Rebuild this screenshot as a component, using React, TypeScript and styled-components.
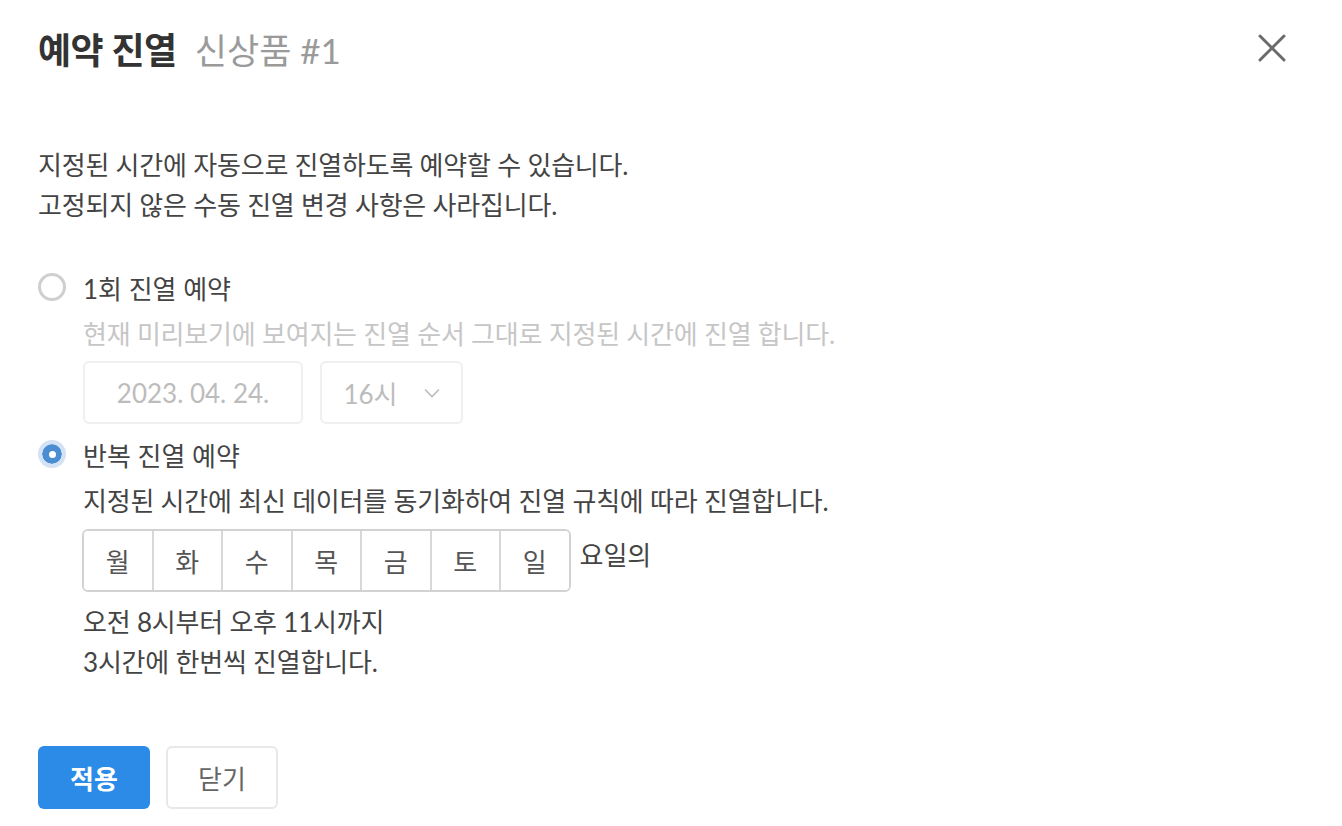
import React, { useState } from 'react';
import styled, { createGlobalStyle } from 'styled-components';

const GlobalStyle = createGlobalStyle`
    html, body {
        margin: 0;
        padding: 0;
        background: #fff;
    }
    body {
        font-family: Lato, "Noto Sans CJK KR", sans-serif;
        color: #444;
    }
`;

const Modal = styled.div`
    width: 1342px;
    height: 826px;
    box-sizing: border-box;
    padding: 26px 38px 0 38px;
    display: flex;
    flex-direction: column;
`;

const Header = styled.div`
    display: flex;
    align-items: center;
    height: 44px;
`;

const Title = styled.h1`
    margin: 0;
    font-size: 36px;
    font-weight: 700;
    color: #333;
    letter-spacing: -0.5px;
`;

const SubTitle = styled.span`
    margin-left: 18px;
    font-size: 35px;
    font-weight: 400;
    color: #9a9a9a;
`;

const HeaderFiller = styled.div`flex: 1;`;

const CloseButton = styled.button`
    border: none;
    background: none;
    padding: 0;
    width: 40px;
    height: 40px;
    margin-right: 12px;
    display: flex;
    align-items: center;
    justify-content: center;
    cursor: pointer;
`;

const Text = styled.div<{ $tone?: 'muted' | 'normal'; $top?: number }>`
    font-size: 26px;
    line-height: 40px;
    letter-spacing: -0.2px;
    color: ${p => p.$tone === 'muted' ? '#c6c6c6' : '#444'};
    margin-top: ${p => p.$top ?? 0}px;
`;

const Intro = styled.div`
    margin-top: 75px;
`;

const OptionRow = styled.label<{ $top: number }>`
    display: flex;
    align-items: center;
    gap: 17px;
    height: 40px;
    margin-top: ${p => p.$top}px;
    font-size: 26px;
    color: #444;
    cursor: pointer;
`;

const RadioCircle = styled.span<{ $checked: boolean }>`
    width: 28px;
    height: 28px;
    box-sizing: border-box;
    border-radius: 50%;
    display: flex;
    align-items: center;
    justify-content: center;
    border: ${p => p.$checked ? '4px solid #d3e2f4' : '3px solid #cfcfcf'};
    background: ${p => p.$checked ? '#4b8dd2' : '#fff'};
    background-clip: padding-box;
    &::after {
        content: '';
        display: ${p => p.$checked ? 'block' : 'none'};
        width: 7px;
        height: 7px;
        border-radius: 50%;
        background: #fff;
    }
`;

const OptionBody = styled.div`
    padding-left: 45px;
    display: flex;
    flex-direction: column;
    align-items: flex-start;
`;

const InputRow = styled.div`
    display: flex;
    gap: 17px;
    margin-top: 7px;
`;

const Field = styled.div<{ $width: number }>`
    width: ${p => p.$width}px;
    height: 63px;
    box-sizing: border-box;
    border: 2px solid #efefef;
    border-radius: 6px;
    display: flex;
    align-items: center;
    justify-content: center;
    gap: 26px;
    font-size: 26px;
    color: #bcbcbc;
`;

const DayLine = styled.div`
    display: flex;
    align-items: flex-start;
    margin-top: 8px;
    margin-left: -1px;
`;

const DayGroup = styled.div`
    display: flex;
    border: 2px solid #d2d2d2;
    border-radius: 6px;
    overflow: hidden;
`;

const DayCell = styled.button<{ $selected?: boolean }>`
    width: 69.5px;
    height: 59px;
    box-sizing: border-box;
    border: none;
    border-left: 2px solid #d8d8d8;
    background: ${p => p.$selected ? '#eaf2fc' : '#fff'};
    font-family: inherit;
    font-size: 26px;
    color: #555;
    padding: 0;
    cursor: pointer;
    &:first-child {
        border-left: none;
        width: 67.5px;
    }
`;

const DaySuffix = styled.span`
    margin-left: 9px;
    font-size: 26px;
    line-height: 52px;
    color: #444;
`;

const Footer = styled.div`
    display: flex;
    gap: 16px;
    margin-top: 64px;
`;

const ActionButton = styled.button<{ $primary?: boolean }>`
    width: 112px;
    height: 63px;
    box-sizing: border-box;
    border-radius: 6px;
    font-family: inherit;
    font-size: 26px;
    font-weight: ${p => p.$primary ? 600 : 400};
    color: ${p => p.$primary ? '#fff' : '#666'};
    background: ${p => p.$primary ? '#2b8be6' : '#fff'};
    border: ${p => p.$primary ? 'none' : '2px solid #e8e8e8'};
    cursor: pointer;
`;

const CloseIcon = () => (
    <svg width="30" height="30" viewBox="0 0 30 30">
        <path d="M3 3 L27 27 M27 3 L3 27" stroke="#6b6b6b" strokeWidth="3" strokeLinecap="round" />
    </svg>
);

const ChevronDown = () => (
    <svg width="16" height="10" viewBox="0 0 16 10">
        <path d="M1 1.5 L8 8.5 L15 1.5" fill="none" stroke="#bcbcbc" strokeWidth="1.6" />
    </svg>
);

const days = ['월', '화', '수', '목', '금', '토', '일'];

const Radio = ({ checked, label, top, onSelect }: { checked: boolean; label: string; top: number; onSelect: () => void }) => (
    <OptionRow $top={top} onClick={onSelect}>
        <RadioCircle $checked={checked} />
        {label}
    </OptionRow>
);

export default function App() {
    const [mode, setMode] = useState<'once' | 'repeat'>('repeat');
    return <>
        <GlobalStyle />
        <Modal>
            <Header>
                <Title>예약 진열</Title>
                <SubTitle>신상품 #1</SubTitle>
                <HeaderFiller />
                <CloseButton aria-label="닫기"><CloseIcon /></CloseButton>
            </Header>

            <Intro>
                <Text>지정된 시간에 자동으로 진열하도록 예약할 수 있습니다.</Text>
                <Text>고정되지 않은 수동 진열 변경 사항은 사라집니다.</Text>
            </Intro>

            <Radio checked={mode === 'once'} label="1회 진열 예약" top={42} onSelect={() => setMode('once')} />
            <OptionBody>
                <Text $tone="muted" $top={7}>현재 미리보기에 보여지는 진열 순서 그대로 지정된 시간에 진열 합니다.</Text>
                <InputRow>
                    <Field $width={220}>2023. 04. 24.</Field>
                    <Field $width={143}>16시<ChevronDown /></Field>
                </InputRow>
            </OptionBody>

            <Radio checked={mode === 'repeat'} label="반복 진열 예약" top={10} onSelect={() => setMode('repeat')} />
            <OptionBody>
                <Text $top={7}>지정된 시간에 최신 데이터를 동기화하여 진열 규칙에 따라 진열합니다.</Text>
                <DayLine>
                    <DayGroup>
                        {days.map(d => <DayCell key={d}>{d}</DayCell>)}
                    </DayGroup>
                    <DaySuffix>요일의</DaySuffix>
                </DayLine>
                <Text $top={10}>오전 8시부터 오후 11시까지</Text>
                <Text>3시간에 한번씩 진열합니다.</Text>
            </OptionBody>

            <Footer>
                <ActionButton $primary>적용</ActionButton>
                <ActionButton>닫기</ActionButton>
            </Footer>
        </Modal>
    </>;
}
